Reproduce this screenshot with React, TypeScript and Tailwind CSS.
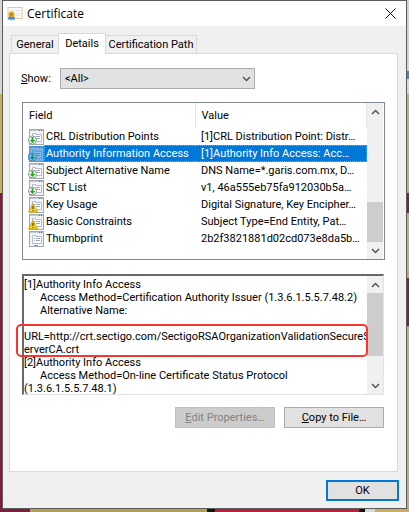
import type { ReactNode } from "react"

type Badge = "arrow" | "warning" | "none"

const fields: { name: string; value: string; badge: Badge; selected?: boolean }[] = [
    { name: "CRL Distribution Points", value: "[1]CRL Distribution Point: Distr…", badge: "arrow" },
    { name: "Authority Information Access", value: "[1]Authority Info Access: Acc…", badge: "arrow", selected: true },
    { name: "Subject Alternative Name", value: "DNS Name=*.garis.com.mx, D…", badge: "arrow" },
    { name: "SCT List", value: "v1, 46a555eb75fa912030b5a…", badge: "arrow" },
    { name: "Key Usage", value: "Digital Signature, Key Encipher…", badge: "warning" },
    { name: "Basic Constraints", value: "Subject Type=End Entity, Pat…", badge: "warning" },
    { name: "Thumbprint", value: "2b2f3821881d02cd073e8da5b…", badge: "none" },
]

function CertificateIcon() {
    return (
        <svg viewBox="0 0 16 16" className="h-4 w-4" aria-hidden="true">
            <rect x="1" y="1.5" width="14" height="11" fill="#f7f8f8" stroke="#ecc898" />
            <path d="M4 4.5h3M8 4.5h5M9 7.5h4M9 9.5h4" stroke="#dfe4e8" />
            <path d="M2 10l-1 4 2-1 1 2 1-3 1 3 1-2 1 1-1-4z" fill="#2d7fe0" />
            <circle cx="4.5" cy="8.5" r="3" fill="#dba520" />
            <circle cx="4.5" cy="8.5" r="1.3" fill="#b07d0c" />
        </svg>
    )
}

function FieldIcon({ badge, selected }: { badge: Badge; selected?: boolean }) {
    return (
        <svg viewBox="0 0 16 16" className="h-4 w-4 shrink-0" aria-hidden="true">
            <rect x="1.5" y="0.5" width="14" height="15" fill="#f1f3f5" stroke="#a3a8af" />
            <path d="M2 1.5h13" stroke="#c4c9cf" />
            <path d="M11 1.5h1M13 1.5h1" stroke="#6d7681" />
            <path d="M4.5 4.5h3v1h6v7h-9z" fill="#fff" stroke="#b4bbc6" />
            <path d="M6 7.5h1M8 7.5h4M6 9.5h1M8 9.5h4" stroke="#9aa6b8" />
            {badge === "none" && <path d="M6 14.5h4" stroke="#22c8f5" />}
            {badge === "arrow" && (
                <>
                    <circle cx="4.5" cy="11" r="4" fill="#fff" stroke="#8d9590" />
                    <path d="M3.5 8h2v3h2l-3 3-3-3h2z" fill="#28a828" />
                </>
            )}
            {badge === "warning" && (
                <>
                    <path d="M5 6.5l4.5 8.5h-9z" fill="#f8d51e" stroke="#d0a60c" strokeLinejoin="round" />
                    <path d="M5 9v3M5 13v1" stroke="#222" />
                </>
            )}
            {selected && <path d="M1 0h15v16H1z M0 8h1v6H0z" fill="#0078d7" opacity="0.5" />}
        </svg>
    )
}

function Chevron({ up = false }: { up?: boolean }) {
    return (
        <svg viewBox="0 0 9 6" className="h-[6px] w-[9px]" fill="none" stroke="#555" strokeWidth="1.5" aria-hidden="true">
            <path d={up ? "M1 5l3.5-3.5L8 5" : "M1 1l3.5 3.5L8 1"} />
        </svg>
    )
}

function ScrollBar({ children }: { children: ReactNode }) {
    return (
        <div className="flex w-4 shrink-0 flex-col bg-[#f0f0f0]">
            <button type="button" aria-label="Scroll up" className="flex h-[17px] items-center justify-center">
                <Chevron up />
            </button>
            <div className="flex flex-1 flex-col">{children}</div>
            <button type="button" aria-label="Scroll down" className="flex h-[17px] items-center justify-center">
                <Chevron />
            </button>
        </div>
    )
}

export default function App() {
    return (
        <div className="flex min-h-screen flex-col font-['Roboto',sans-serif] text-[11px] leading-[13px] text-black">
            <div className="flex flex-1">
                <div className="w-[2px] bg-[linear-gradient(#d6d6d6_94px,#c8ad62_94px,#c8ad62_193px,#7f1d3a_193px)]" />
                <main className="flex min-w-0 flex-1 flex-col border border-[#5c5c5c] bg-[#f0f0f0]">
                    <header className="flex h-[25px] items-center bg-white pl-1 pr-[10px]">
                        <CertificateIcon />
                        <h1 className="ml-1 flex-1 font-['Open_Sans',sans-serif] text-[12px]">Certificate</h1>
                        <button type="button" aria-label="Close">
                            <svg viewBox="0 0 11 11" className="h-[11px] w-[11px]" stroke="#111" aria-hidden="true">
                                <path d="M0.5 0.5l10 10M10.5 0.5l-10 10" />
                            </svg>
                        </button>
                    </header>

                    <div className="flex flex-1 flex-col pb-[7px] pl-[6px] pr-[7px] pt-[7px]">
                        <nav className="flex items-end pl-[2px]">
                            <button type="button" className="h-[18px] w-[47px] border border-b-0 border-r-0 border-[#d9d9d9]">General</button>
                            <button type="button" className="relative -mb-px h-[21px] w-12 border border-b-0 border-[#d9d9d9] bg-white pb-[2px]">Details</button>
                            <button type="button" className="h-[18px] w-[91px] border border-b-0 border-l-0 border-[#d9d9d9]">Certification Path</button>
                        </nav>

                        <section className="mr-px flex flex-1 flex-col border border-[#d9d9d9] bg-white px-3 pt-[14px]">
                            <div className="flex items-center">
                                <label htmlFor="show" className="-ml-px w-[39px]"><u>S</u>how:</label>
                                <div className="relative w-[195px]">
                                    <select id="show" className="h-[21px] w-full appearance-none border border-[#adadad] bg-[#e1e1e1] pl-1">
                                        <option>&lt;All&gt;</option>
                                    </select>
                                    <span className="pointer-events-none absolute right-1 top-2"><Chevron /></span>
                                </div>
                            </div>

                            <div className="mt-[13px] flex h-[158px] border border-[#828790] pr-px">
                                <table className="w-full flex-1 table-fixed self-start">
                                    <thead>
                                        <tr className="h-[25px] text-left">
                                            <th className="w-[172px] border-r border-[#e5e5e5] p-0 pl-[6px] font-normal">Field</th>
                                            <th className="border-r border-[#e5e5e5] p-0 pl-[6px] font-normal">Value</th>
                                        </tr>
                                    </thead>
                                    <tbody>
                                        {fields.map((f) => (
                                            <tr key={f.name}>
                                                <td className="p-0 pl-[5px]">
                                                    <div className="flex h-[17px] items-center whitespace-nowrap">
                                                        <FieldIcon badge={f.badge} selected={f.selected} />
                                                        <span className={f.selected ? "flex-1 border border-r-0 border-dotted border-[#ff8728] bg-[#0078d7] pl-px leading-[15px] text-white" : "flex-1 pl-[2px]"}>
                                                            {f.name}
                                                        </span>
                                                    </div>
                                                </td>
                                                <td className="p-0">
                                                    <div className={f.selected ? "overflow-hidden whitespace-nowrap border border-l-0 border-dotted border-[#ff8728] bg-[#0078d7] pl-[6px] leading-[15px] text-white" : "overflow-hidden whitespace-nowrap pl-[6px] leading-[17px]"}>
                                                        {f.value}
                                                    </div>
                                                </td>
                                            </tr>
                                        ))}
                                    </tbody>
                                </table>
                                <ScrollBar>
                                    <div className="mt-auto h-10 bg-[#cdcdcd]" />
                                </ScrollBar>
                            </div>

                            <div className="relative mr-px mt-[14px] flex h-[121px] border-b border-r border-l-2 border-t-2 border-b-[#e3e3e3] border-l-[#696969] border-r-[#e3e3e3] border-t-[#696969]">
                                <div className="min-w-0 flex-1 whitespace-pre pt-[2px]">
                                    <p>[1]Authority Info Access</p>
                                    <p className="pl-4">Access Method=Certification Authority Issuer (1.3.6.1.5.5.7.48.2)</p>
                                    <p className="pl-4">Alternative Name:</p>
                                    <p className="mt-[13px]">URL=http://crt.sectigo.com/SectigoRSAOrganizationValidationSecureS<br />erverCA.crt</p>
                                    <p>[2]Authority Info Access</p>
                                    <p className="pl-4">Access Method=On-line Certificate Status Protocol</p>
                                    <p>(1.3.6.1.5.5.7.48.1)</p>
                                </div>
                                <ScrollBar>
                                    <div className="h-[63px] bg-[#cdcdcd]" />
                                </ScrollBar>
                                <div className="pointer-events-none absolute -left-2 right-[15px] top-12 h-[33px] rounded-[5px] border-2 border-[#f8372c]" />
                            </div>

                            <div className="mr-px mt-3 flex justify-end gap-[9px]">
                                <button type="button" disabled className="h-[21px] w-[100px] border border-[#bfbfbf] bg-[#cccccc] text-[#838383]"><u>E</u>dit Properties…</button>
                                <button type="button" className="h-[21px] w-[100px] border border-[#adadad] bg-[#e1e1e1]"><u>C</u>opy to File…</button>
                            </div>
                        </section>

                        <button type="button" className="mt-2 h-[21px] w-[73px] self-end border-2 border-[#0078d7] bg-[#e1e1e1]">OK</button>
                    </div>
                </main>
                <div className="w-[2px] bg-[linear-gradient(#cfd4d2_71px,#3f86ac_71px,#3f86ac_79px,#d6d6d6_79px,#d6d6d6_94px,#c8ad62_94px,#c8ad62_193px,#7f1d3a_193px,#7f1d3a_213px,#c8ad62_213px,#c8ad62_278px,#7f1d3a_278px,#7f1d3a_326px,#c8ad62_326px)]" />
            </div>
            <div className="flex h-[3px]">
                <div className="w-[30px] bg-[#7f1d3a]" />
                <div className="flex-1 bg-[#b89d58]" />
                <div className="w-2 bg-[#111]" />
                <div className="w-[144px] bg-[#b8203e]" />
                <div className="w-[6px] bg-[#111]" />
                <div className="w-[10px] bg-[#d6d6d6]" />
                <div className="w-[34px] bg-[#c8ad62]" />
            </div>
        </div>
    )
}
